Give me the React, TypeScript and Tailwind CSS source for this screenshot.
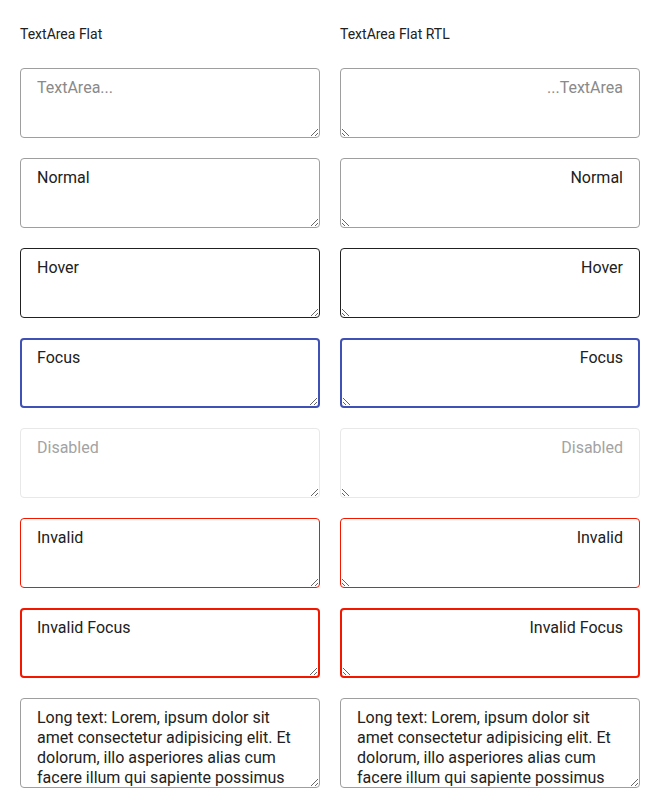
const longText =
  'Long text: Lorem, ipsum dolor sit amet consectetur adipisicing elit. Et dolorum, illo asperiores alias cum facere illum qui sapiente possimus cumque quae nulla, voluptas eveniet dolore.'

type Field = {
  key: string
  value?: string
  placeholder?: string
  disabled?: boolean
  ltr?: boolean
  className: string
}

const fields: Field[] = [
  { key: 'empty', placeholder: 'TextArea...', className: 'h-[70px] border border-[#9e9e9e] px-4 pt-[9px] pb-2' },
  { key: 'normal', value: 'Normal', className: 'h-[70px] border border-[#9e9e9e] px-4 pt-[9px] pb-2' },
  { key: 'hover', value: 'Hover', className: 'h-[70px] border border-[#212121] px-4 pt-[9px] pb-2' },
  { key: 'focus', value: 'Focus', className: 'h-[70px] border-2 border-[#3f51b5] px-[15px] pt-2 pb-[7px]' },
  { key: 'disabled', value: 'Disabled', disabled: true, className: 'h-[70px] border border-[#e8e8e8] px-4 pt-[9px] pb-2 text-[#a3a3a3]' },
  { key: 'invalid', value: 'Invalid', className: 'h-[70px] border border-[#f31700] px-4 pt-[9px] pb-2' },
  { key: 'invalid-focus', value: 'Invalid Focus', className: 'h-[70px] border-2 border-[#f31700] px-[15px] pt-2 pb-[7px]' },
  { key: 'long', value: longText, ltr: true, className: 'h-[90px] border border-[#9e9e9e] px-4 pt-[9px] pb-0' },
]

function Column({ title, rtl }: { title: string; rtl?: boolean }) {
  return (
    <div className="flex flex-col gap-5">
      <div className="flex h-7 items-center text-sm text-[#212121]">{title}</div>
      {fields.map((f) => (
        <textarea
          key={f.key}
          dir={rtl && !f.ltr ? 'rtl' : 'ltr'}
          defaultValue={f.value}
          placeholder={f.placeholder}
          disabled={f.disabled}
          className={`block w-full overflow-hidden rounded bg-white text-base leading-5 text-[#212121] outline-none placeholder:text-[#8a8a8a] ${f.className}`}
        />
      ))}
    </div>
  )
}

export default function App() {
  return (
    <div className="min-h-[808px] bg-white font-['Roboto',sans-serif]">
      <div className="grid grid-cols-2 gap-x-5 p-5">
        <Column title="TextArea Flat" />
        <Column title="TextArea Flat RTL" rtl />
      </div>
    </div>
  )
}
